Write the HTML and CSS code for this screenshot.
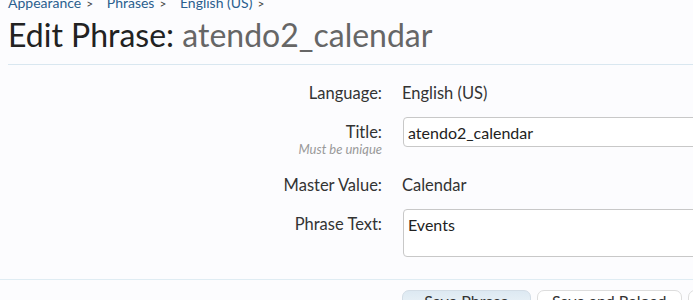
FILE: index.html
```html
<!DOCTYPE html>
<html lang="en">
<head>
  <meta charset="UTF-8">
  <title>Edit Phrase: atendo2_calendar</title>
  <link rel="stylesheet" href="styles.css">
</head>
<body>
  <div class="page">
    <!-- Breadcrumb -->
    <div class="crumbs">
      <a href="#">Appearance</a><span class="sep">&gt;</span>
      <a href="#">Phrases</a><span class="sep">&gt;</span>
      <a href="#">English (US)</a><span class="sep">&gt;</span>
    </div>

    <h1 class="title">Edit Phrase: <span class="title-sub">atendo2_calendar</span></h1>

    <form class="phrase-form">
      <dl class="row">
        <dt>Language:</dt>
        <dd>English (US)</dd>
      </dl>

      <dl class="row">
        <dt>
          <label for="title">Title:</label>
          <span class="hint">Must be unique</span>
        </dt>
        <dd><input type="text" id="title" class="text-input" value="atendo2_calendar"></dd>
      </dl>

      <dl class="row">
        <dt>Master Value:</dt>
        <dd>Calendar</dd>
      </dl>

      <dl class="row">
        <dt><label for="phraseText">Phrase Text:</label></dt>
        <dd><textarea id="phraseText" class="text-area">Events</textarea></dd>
      </dl>

      <!-- Submit buttons -->
      <div class="submit-unit">
        <button type="button" class="button primary">Save Phrase</button>
        <button type="button" class="button">Save and Reload</button>
        <button type="button" class="button">Revert</button>
      </div>
    </form>
  </div>
</body>
</html>
```

FILE: styles.css
```css
body, h1, dl, dd {
  margin: 0;
  padding: 0;
}

*, *::before, *::after {
  box-sizing: border-box;
}

body {
  font-family: Lato, "Open Sans", sans-serif;
  background-color: #fcfcfe;
  color: #333;
  overflow: hidden;
}

.page {
  padding-left: 8px;
  width: 900px;
}

/* Breadcrumb */
.crumbs {
  font-size: 14px;
  line-height: 16px;
  margin-top: -5px;
  height: 16px;
}

.crumbs a {
  color: #2b5f8e;
  text-decoration: none;
}

.crumbs .sep {
  color: #444;
  font-size: 12px;
  margin: 0 10px 0 5px;
}

/* Heading */
.title {
  font-size: 32px;
  font-weight: normal;
  color: #222;
  line-height: 40px;
  margin-top: 4px;
  padding-bottom: 9px;
  border-bottom: 1px solid #d9e7f0;
  width: 700px;
}

.title-sub {
  color: #666;
}

/* Form rows */
.phrase-form {
  padding-top: 18px;
}

.row {
  display: grid;
  grid-template-columns: 374px 1fr;
  column-gap: 20px;
  font-size: 16.5px;
  line-height: 20px;
  margin-bottom: 14px;
}

.row:nth-child(2) {
  margin-bottom: 19px;
}

.row dt {
  text-align: right;
  color: #333;
}

.row dd {
  color: #333;
}

.row:nth-child(2) dt,
.row:nth-child(4) dt {
  padding-top: 5px;
}

.hint {
  display: block;
  font-size: 13px;
  line-height: 14px;
  font-style: italic;
  color: #999;
}

.text-input,
.text-area {
  display: block;
  font-family: inherit;
  font-size: 16px;
  color: #222;
  background-color: #fff;
  border: 1px solid #c8c8c8;
  border-radius: 4px;
  width: 420px;
  margin-left: 1px;
  padding: 0 4px;
}

.text-input {
  height: 30px;
}

.text-area {
  height: 48px;
  padding-top: 5px;
  resize: none;
}

/* Buttons */
.submit-unit {
  margin-top: 22px;
  margin-left: -8px;
  border-top: 1px solid #dfecf3;
  padding: 10px 0 0 402px;
  display: flex;
  gap: 6px;
}

.button {
  font-family: inherit;
  font-size: 16px;
  color: #333;
  background-color: #fff;
  border: 1px solid #ddd;
  border-radius: 7px;
  height: 28px;
  padding: 0 14px;
  line-height: 20px;
  display: flex;
  align-items: flex-start;
  justify-content: center;
}

.button.primary {
  background: linear-gradient(#dde9f2, #f4f8fb);
  border-color: #d3dde6;
  width: 129px;
}
```
